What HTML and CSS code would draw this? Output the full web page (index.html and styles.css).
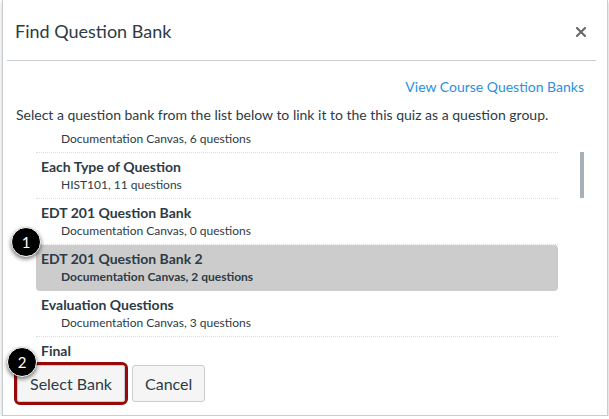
FILE: index.html
```html
<!DOCTYPE html>
<html lang="en">

<head>
  <meta charset="UTF-8">
  <title>Find Question Bank</title>
  <link rel="stylesheet" href="styles.css">
</head>

<body>

  <div class="dialog">
    <div class="dialog-header">
      <h1>Find Question Bank</h1>
      <button class="close" aria-label="Close">
        <svg width="10" height="10" viewBox="0 0 10 10"><path d="M1 1 L9 9 M9 1 L1 9" stroke="#666" stroke-width="2" stroke-linecap="square"/></svg>
      </button>
    </div>

    <div class="dialog-body">
      <div class="link-row"><a href="#">View Course Question Banks</a></div>
      <p class="intro">Select a question bank from the list below to link it to the this quiz as a question group.</p>

      <div class="bank-list">
        <ul class="banks">
          <li><div class="bank-title">Documentation Questions</div><div class="bank-info">Documentation Canvas, 6 questions</div></li>
          <li><div class="bank-title">Each Type of Question</div><div class="bank-info">HIST101, 11 questions</div></li>
          <li><div class="bank-title">EDT 201 Question Bank</div><div class="bank-info">Documentation Canvas, 0 questions</div></li>
          <li class="selected"><div class="bank-title">EDT 201 Question Bank 2</div><div class="bank-info">Documentation Canvas, 2 questions</div></li>
          <li><div class="bank-title">Evaluation Questions</div><div class="bank-info">Documentation Canvas, 3 questions</div></li>
          <li><div class="bank-title">Final</div><div class="bank-info">Documentation Canvas, 5 questions</div></li>
        </ul>
        <div class="scroll-thumb"></div>
      </div>
    </div>

    <div class="dialog-footer">
      <span class="callout-box"><button class="btn">Select Bank</button></span>
      <button class="btn">Cancel</button>
    </div>
  </div>

  <!-- step markers -->
  <span class="step step1">1</span>
  <span class="step step2">2</span>

</body>
</html>
```

FILE: styles.css
```css
body { margin: 0; background: #fff; font-family: Lato, "Open Sans", sans-serif; color: #2d3b45; position: relative; }

.dialog { box-sizing: border-box; width: 606px; height: 416px; margin-left: 2px; background: #fff; border: 1px solid #c7cdd1; border-top: none; box-shadow: 0 2px 3px rgba(0,0,0,0.25); display: flex; flex-direction: column; }

.dialog-header { box-sizing: border-box; height: 61px; margin: 0 11px 0 4px; padding-left: 8px; border-bottom: 1px solid #c7cdd1; display: flex; align-items: center; justify-content: space-between; }
.dialog-header h1 { margin: 0; font-size: 18px; font-weight: normal; line-height: 22px; padding-top: 1px; }
.close { background: none; border: none; padding: 0; margin-right: 10px; margin-top: 4px; width: 10px; height: 10px; display: flex; }

.dialog-body { padding: 16px 23px 0 13px; }
.link-row { text-align: right; font-size: 14px; line-height: 20px; }
.link-row a { color: #2b8fe0; text-decoration: none; }
.intro { margin: 8px 0 4px; font-size: 14px; line-height: 20px; white-space: nowrap; }

.bank-list { position: relative; height: 229px; overflow: hidden; margin-left: 20px; }
.banks { list-style: none; margin: -22px 0 0; padding: 0; width: 522px; }
.banks li { box-sizing: border-box; height: 46px; padding: 4px 5px 5px; border-bottom: 1px dotted #dcdfe2; }
.banks li.selected { background: #cccccc; border-radius: 4px; border-bottom-color: transparent; }
.bank-title { font-size: 14px; font-weight: bold; line-height: 20px; }
.bank-info { font-size: 12px; line-height: 16px; padding-left: 20px; }
.selected .bank-info { font-weight: bold; }
.scroll-thumb { position: absolute; left: 544px; top: 23px; width: 5px; height: 46px; background: #a9b1b8; }

.dialog-footer { padding: 4px 0 0 11px; display: flex; align-items: center; gap: 4px; }
.callout-box { display: inline-flex; border: 3px solid #960a0a; border-radius: 6px; }
.btn { font-family: Lato, "Open Sans", sans-serif; font-size: 16px; color: #2d3b45; background: #f5f5f5; border: 1px solid #c7cdd1; border-radius: 3px; height: 37px; padding: 0 12px; }

.step { position: absolute; width: 28px; height: 28px; border-radius: 50%; background: #000; color: #fff; font-size: 15px; line-height: 28px; text-align: center; box-shadow: 0 2px 4px rgba(0,0,0,0.55); border: 1px solid #fff; }
.step1 { left: 11px; top: 227px; }
.step2 { left: 7px; top: 347px; }
```
